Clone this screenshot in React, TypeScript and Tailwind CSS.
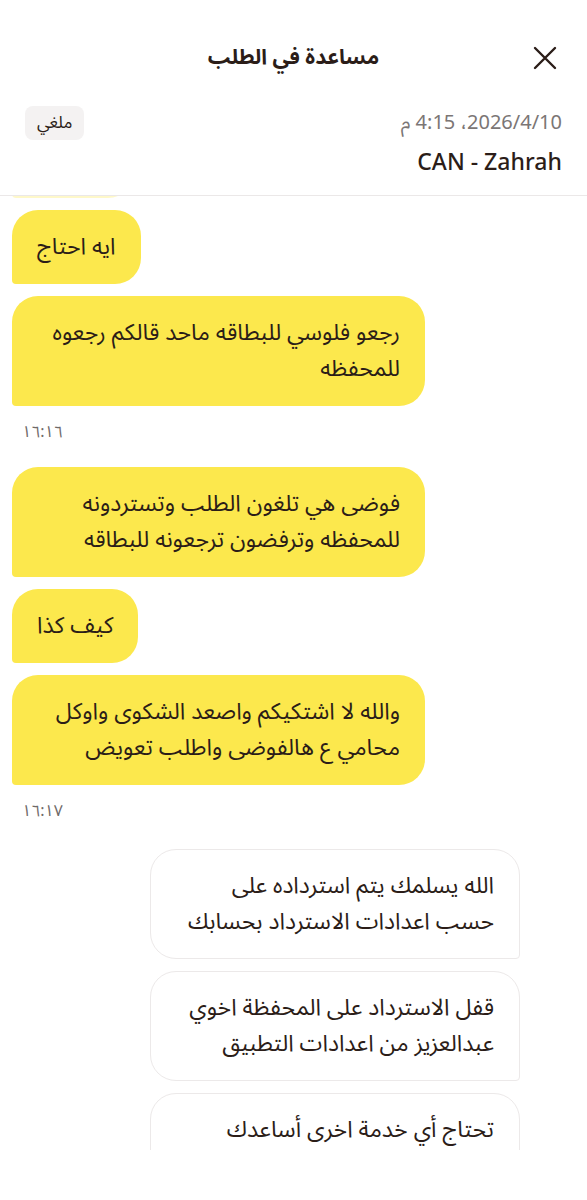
const font = "font-['Noto_Sans_Arabic','Noto_Sans','DejaVu_Sans',sans-serif]";

const CloseIcon = () => (
  <svg width="24" height="24" viewBox="0 0 24 24" fill="none">
    <path d="M2 2L22 22M22 2L2 22" stroke="#2b1d18" strokeWidth="2.4" strokeLinecap="round" />
  </svg>
);

const Mine = ({ lines, w }: { lines: string[]; w?: string }) => (
  <div
    className={`shrink-0 self-end rounded-[26px] rounded-bl-[4px] bg-[#fce84d] px-[25px] py-[19px] text-[23px] leading-[36px] text-[#2b1d18] ${w ?? ""}`}
  >
    {lines.map((l, i) => (
      <div key={i} className="whitespace-nowrap">
        {l}
      </div>
    ))}
  </div>
);

const Theirs = ({ lines }: { lines: string[] }) => (
  <div className="mr-[55px] w-[370px] shrink-0 self-start rounded-[26px] rounded-br-[4px] border border-[#ece9e9] bg-white px-[25px] py-[18px] text-[23px] leading-[36px] text-[#2b1d18]">
    {lines.map((l, i) => (
      <div key={i} className="whitespace-nowrap">
        {l}
      </div>
    ))}
  </div>
);

const Stamp = ({ t, cls }: { t: string; cls: string }) => (
  <div className={`shrink-0 self-end pl-[10px] text-[16px] leading-[20px] text-[#6f6a69] ${cls}`}>{t}</div>
);

export default function App() {
  return (
    <div dir="rtl" className={`h-[1200px] w-[587px] bg-white ${font}`}>
      {/* Header */}
      <div className="flex h-[92px] items-center px-[30px] pt-[24px]">
        <div className="w-[28px]">
          <CloseIcon />
        </div>
        <div className="flex-1 text-center text-[21px] font-bold text-[#2b1d18]">مساعدة في الطلب</div>
        <div className="w-[28px]" />
      </div>

      {/* Order info */}
      <div className="border-b border-[#ebe8e8] px-[25px] pb-[15px]">
        <div className="flex items-center justify-between pt-[14px]">
          <div className="text-[20px] text-[#7b7675]">2026/4/10، 4:15 م</div>
          <div className="rounded-[8px] bg-[#f4f2f2] px-[12px] py-[3px] text-[17px] leading-[28px] text-[#2b1d18]">
            ملغي
          </div>
        </div>
        <div className="pt-[6px] text-[23px] font-medium leading-[34px] text-[#2b1d18]">CAN - Zahrah</div>
      </div>

      {/* Chat */}
      <div className="flex h-[954px] flex-col gap-[12px] overflow-hidden px-[12px]">
        <div className="-mt-[74px] h-[76px] w-[122px] shrink-0 self-end rounded-[26px] rounded-bl-[4px] bg-[#fce84d] opacity-30" />
        <Mine lines={["ايه احتاج"]} />
        <Mine w="w-[413px]" lines={["رجعو فلوسي للبطاقه ماحد قالكم رجعوه", "للمحفظه"]} />
        <Stamp t="١٦:١٦" cls="mt-[4px] mb-[13px]" />
        <Mine w="w-[413px]" lines={["فوضى هي تلغون الطلب وتستردونه", "للمحفظه وترفضون ترجعونه للبطاقه"]} />
        <Mine lines={["كيف كذا"]} />
        <Mine w="w-[413px]" lines={["والله لا اشتكيكم واصعد الشكوى واوكل", "محامي ع هالفوضى واطلب تعويض"]} />
        <Stamp t="١٦:١٧" cls="mt-[4px] mb-[16px]" />
        <Theirs lines={["الله يسلمك يتم استرداده على", "حسب اعدادات الاسترداد بحسابك"]} />
        <Theirs lines={["قفل الاسترداد على المحفظة اخوي", "عبدالعزيز من اعدادات التطبيق"]} />
        <Theirs lines={["تحتاج أي خدمة اخرى أساعدك", "\u00a0"]} />
      </div>
    </div>
  );
}
